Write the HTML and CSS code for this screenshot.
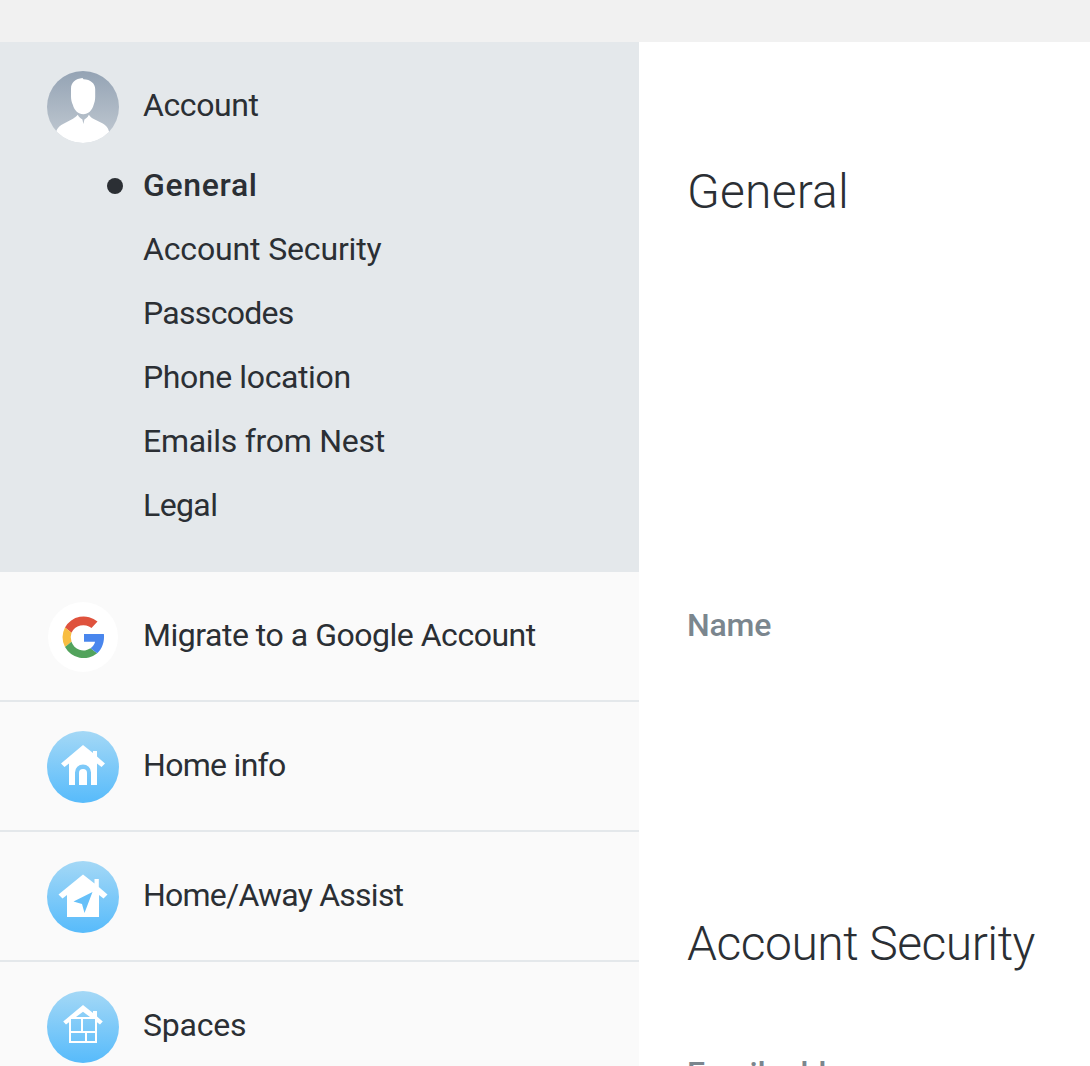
FILE: index.html
```html
<!DOCTYPE html>
<html lang="en">
<head>
    <meta charset="UTF-8">
    <meta name="viewport" content="width=device-width, initial-scale=1.0">
    <title>Account settings</title>
    <link rel="stylesheet" href="styles.css">
</head>
<body>
    <div class="topbar"></div>
    <div class="container">
        <nav class="sidebar">
            <div class="section active">
                <div class="section-header">
                    <svg class="icon" viewBox="0 0 72 72">
                        <defs>
                            <linearGradient id="grey" x1="0" y1="0" x2="0" y2="1">
                                <stop offset="0" stop-color="#94a3b4"/>
                                <stop offset="1" stop-color="#c3cbd3"/>
                            </linearGradient>
                            <linearGradient id="blue" x1="0" y1="0" x2="0" y2="1">
                                <stop offset="0" stop-color="#a4d8f6"/>
                                <stop offset="1" stop-color="#57bbfb"/>
                            </linearGradient>
                            <clipPath id="round"><circle cx="36" cy="36" r="36"/></clipPath>
                        </defs>
                        <circle cx="36" cy="36" r="36" fill="url(#grey)"/>
                        <g fill="#fff" clip-path="url(#round)">
                            <path d="M35.5 7l1 1.3c7 .3 11.700 4.200 11.700 9.700v7.500c0 3.500-.6 6-1.600 8.500-1.500 5.500-5.400 9.300-10.300 9.300s-9-3.800-10.400-9.300c-1.200-2.700-1.900-5.200-1.900-8.500v-8c0-6 4.500-9.800 11.500-10.500z"/>
                            <path d="M30.800 43.800c1 2.500 3.400 3.700 4.600 4.700l1 4.500 1-4.500c1.200-1 3.600-2.200 4.400-4.700 1.700 1.700 2.200 2.800 4 3.800l10 5c3.200 1.600 5.200 4.200 6.200 7.800V72H9V60.400c1.500-3.600 4-6.100 8-8l9-4.700c2-1 3-2.200 4.800-3.900z"/>
                        </g>
                    </svg>
                    <span class="label account">Account</span>
                </div>
                <ul class="submenu">
                    <li class="current">General</li>
                    <li class="security">Account Security</li>
                    <li class="passcodes">Passcodes</li>
                    <li class="phone">Phone location</li>
                    <li class="emails">Emails from Nest</li>
                    <li class="legal">Legal</li>
                </ul>
            </div>
            <div class="section">
                <svg class="icon" viewBox="0 0 72 72">
                    <circle cx="36" cy="36" r="35" fill="#fff"/>
                    <path fill="#df523d" d="M18 26.500A21.300 21.300 0 0 1 50.500 20.500L44.500 27A13 13 0 0 0 24.500 31.800z"/>
                    <path fill="#f8bd41" d="M18 26.500L24.500 31.800A13 13 0 0 0 24.500 40.800L18 46A21.300 21.300 0 0 1 18 26.500z"/>
                    <path fill="#52a35c" d="M18 46L24.500 40.800A12.500 12.500 0 0 0 43.500 47.300L50.200 52.300A21.300 21.300 0 0 1 18 46z"/>
                    <path fill="#4986ed" d="M37 33h19.900c.8 7.500-1.700 14.800-6.700 19.300L43.500 47.300c2.200-1.500 3.900-3.900 4.600-6.500H37z"/>
                </svg>
                <span class="label google">Migrate to a Google Account</span>
            </div>
            <div class="section">
                <svg class="icon" viewBox="0 0 72 72">
                    <circle cx="36" cy="36" r="36" fill="url(#blue)"/>
                    <path fill="#fff" d="M36 14L46 22V20h4v5.500L58 32.500 54.500 36 50 32.500V54H44V41.500a8 8 0 0 0-16 0V54H22V32.500L17.500 36 14 32.500z"/>
                    <path fill="#fff" d="M32 54V42a4 4 0 0 1 8 0V54z"/>
                </svg>
                <span class="label info">Home info</span>
            </div>
            <div class="section">
                <svg class="icon" viewBox="0 0 72 72">
                    <circle cx="36" cy="36" r="36" fill="url(#blue)"/>
                    <path fill="#fff" d="M36 13.500L47.500 22.500V18h4.300v8L60.500 33.500 56.500 37.500 52 34V56H20V34L15.500 37.500 11.500 33.500z"/>
                    <path fill="#66c0f9" d="M45.500 31L37.500 52 35 43 26.500 40.500z"/>
                </svg>
                <span class="label assist">Home/Away Assist</span>
            </div>
            <div class="section">
                <svg class="icon" viewBox="0 0 72 72">
                    <circle cx="36" cy="36" r="36" fill="url(#blue)"/>
                    <path fill="#fff" fill-rule="evenodd" d="M36 14L46 22V20h4v5.500L55.800 30.500 53 33.500 50 31.300V52H22V31.300L19 33.500 16.200 30.500zM36 20.700L29 26H43zM24 28V40H34V28zM36 28V40H48V28zM24 42V50H38V42zM40 42V50H48V42z"/>
                </svg>
                <span class="label spaces">Spaces</span>
            </div>
        </nav>
        <main class="content">
            <section class="general">
                <h2>General</h2>
                <div class="field">Name</div>
            </section>
            <section>
                <h2 class="security-title">Account Security</h2>
                <div class="field email">Email address</div>
            </section>
        </main>
    </div>
</body>
</html>
```

FILE: styles.css
```css
* {
    box-sizing: border-box;
}

body {
    margin: 0;
    height: 1066px;
    overflow: hidden;
    background-color: #fff;
    color: #2b2f34;
    font-family: Roboto, Arial, sans-serif;
    font-size: 32px;
    line-height: 64px;
}

.topbar {
    height: 42px;
    background-color: #f1f1f1;
}

.container {
    display: flex;
    height: 1024px;
    overflow: hidden;
}

.sidebar {
    width: 639px;
    flex-shrink: 0;
    background-color: #fafafa;
}

.section {
    display: flex;
    align-items: center;
    height: 130px;
    padding: 0 0 2px 47px;
    border-bottom: 2px solid #e4e8eb;
}

.section.active {
    display: block;
    height: 530px;
    padding: 29px 0 0 47px;
    background-color: #e4e8eb;
    border-bottom: none;
}

.section-header {
    display: flex;
    align-items: center;
    height: 72px;
}

.icon {
    width: 72px;
    height: 72px;
    margin-right: 24px;
    flex-shrink: 0;
}

.section:not(.active) .icon {
    margin-top: 4px;
}

.submenu {
    list-style: none;
    margin: 10px 0 0;
    padding: 0 0 0 96px;
}

.submenu li {
    height: 64px;
}

.submenu .current {
    display: flex;
    align-items: center;
    margin-left: -36px;
    font-weight: 500;
    letter-spacing: 0.65px;
}

.current::before {
    content: "";
    width: 16px;
    height: 16px;
    margin: 2px 20px 0 0;
    border-radius: 50%;
    background-color: #2b2f34;
}

/* letter spacing */
.account {
    margin-bottom: 4px;
    letter-spacing: -0.4px;
}

.security {
    letter-spacing: -0.15px;
}

.passcodes,
.info {
    letter-spacing: -0.7px;
}

.phone {
    letter-spacing: -0.38px;
}

.emails {
    letter-spacing: -0.28px;
}

.legal {
    letter-spacing: -0.6px;
}

.google {
    letter-spacing: -0.48px;
}

.assist {
    letter-spacing: -0.77px;
}

.spaces {
    letter-spacing: -0.2px;
}

.content {
    flex: 1;
    padding: 118px 0 0 48px;
}

.general {
    height: 752px;
}

h2 {
    margin: 0;
    font-size: 48px;
    font-weight: 300;
    line-height: 64px;
    letter-spacing: 0.2px;
}

.security-title {
    letter-spacing: -0.5px;
}

.field {
    margin-top: 369px;
    color: #7b868e;
    font-weight: 500;
    letter-spacing: -0.2px;
}

.field.email {
    margin-top: 65px;
}
```
